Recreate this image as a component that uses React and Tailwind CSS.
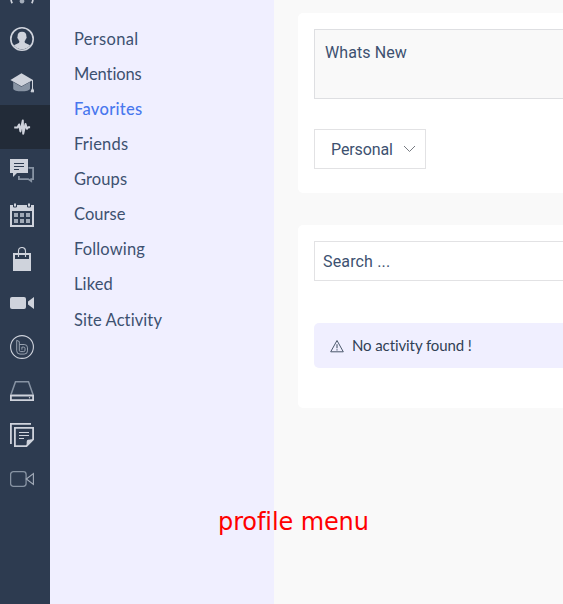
import React from "react";

const LIGHT = "#cfd3dc";
const DIM = "#8793a3";

function Icon({ children }) {
  return (
    <svg className="block h-6 w-6 shrink-0" viewBox="0 0 24 24" fill="none">
      {children}
    </svg>
  );
}

const railIcons = [
  {
    name: "profile",
    art: (
      <>
        <circle cx="12" cy="12" r="11.2" stroke={LIGHT} strokeWidth="1.6" />
        <path
          d="M12 4.700c-3 0-4.600 1.900-4.400 4.700-.5.500-.3 2 .6 2.500.2.900.6 1.500 1.100 2 .2 1.300-.2 1.900-1.100 2.300L3.900 18.200A10.200 10.200 0 0 0 12 22.200a10.200 10.200 0 0 0 8.100-4l-4.300-2c-.9-.4-1.300-1-1.100-2.300.5-.5.900-1.100 1.100-2 .9-.5 1.100-2 .6-2.500.2-2.800-1.300-4.700-4.300-4.700z"
          fill={LIGHT}
        />
      </>
    ),
  },
  {
    name: "courses",
    art: (
      <>
        <path d="M3.200 11v6.500c0 3.800 16.800 3.800 16.800 0V11l-8.600 4.800z" fill={DIM} />
        <path d="M11.500 2.300 23 8.900l-11.500 6.400L.4 8.900z" fill={LIGHT} />
        <path d="M22.500 9v9.500M22.500 17.200l-1.500 3.600h3z" stroke={LIGHT} strokeWidth="1" fill={LIGHT} />
      </>
    ),
  },
  {
    name: "activity",
    active: true,
    art: (
      <path
        d="M4.200 12.400h3.300l1.600-2.900 1.300 6.900L12.800 5.500l.4 13.200 2.300-9.700 1.400 4.800 1.200-1.500h2"
        stroke={LIGHT}
        strokeWidth="2"
        strokeLinejoin="round"
      />
    ),
  },
  {
    name: "messages",
    art: (
      <>
        <path d="M18.500 8.900h4.600v11.200h-1.900v2l-3-2H8.900v-3" stroke={DIM} strokeWidth="1.8" />
        <path d="M0 0h18v14H7l-4 4v-4H0z" fill={LIGHT} />
        <path d="M4 4.500h10M4 7.500h10M4 10.500h5" stroke="#2d3b50" strokeWidth="1" />
      </>
    ),
  },
  {
    name: "calendar",
    art: (
      <>
        <path d="M0 2h24v22H0z" fill={LIGHT} />
        <path d="M2 8h20v14H2z" fill="#2d3b50" />
        <path d="M4 10h4v4H4zM10 10h4v4h-4zM16 10h4v4h-4zM4 16h4v4H4zM10 16h4v4h-4zM16 16h4v4h-4z" fill="#a0a9b6" />
        <path d="M3.500 0h3v4h-3zM17.500 0h3v4h-3z" fill={LIGHT} stroke="#2d3b50" strokeWidth="1" />
      </>
    ),
  },
  {
    name: "shop",
    art: (
      <>
        <path d="M3 6h18v18H3z" fill={LIGHT} />
        <path d="M5 8h14v4H5z" fill="#2d3b50" />
        <path d="M8.500 10V4a3.500 3.500 0 0 1 7 0v6" stroke={LIGHT} strokeWidth="1.1" />
      </>
    ),
  },
  {
    name: "video",
    art: (
      <>
        <rect x="0" y="6" width="16" height="12" rx="2" fill={LIGHT} />
        <path d="M24 6v12l-6-4.500v-3z" fill={LIGHT} />
      </>
    ),
  },
  {
    name: "meetings",
    art: (
      <>
        <circle cx="12" cy="12" r="11.400" stroke={LIGHT} strokeWidth="1.1" />
        <path
          d="M6.700 5.300 9.300 6.600V9.500h4.900a3.300 3.300 0 0 1 3.300 3.300v3a3.300 3.300 0 0 1-3.300 3.300H10a3.300 3.300 0 0 1-3.300-3.300zM9.300 9.500v5.800c0 .8.500 1.300 1.300 1.300h3.100c.8 0 1.300-.5 1.300-1.300v-1.900c0-.8-.5-1.300-1.300-1.300h-1.800v2.600"
          stroke="#a4adba"
          strokeWidth=".9"
        />
      </>
    ),
  },
  {
    name: "drive",
    art: (
      <>
        <path d="M1 15.500 5.500 2.700h13L23 15.500" stroke={DIM} strokeWidth="1.500" />
        <path d="M.9 16.500h22.200v4.600H.9z" stroke={LIGHT} strokeWidth="1.800" />
        <circle cx="19.500" cy="18.700" r=".7" fill={LIGHT} />
      </>
    ),
  },
  {
    name: "notes",
    art: (
      <>
        <path d="M21 .9H.9V21" stroke={LIGHT} strokeWidth="1.800" />
        <path d="M4.900 4.900h18.200v11.600l-6.600 6.600H4.900z" stroke={LIGHT} strokeWidth="1.800" />
        <path d="M15.500 24c2-1.500.7-5 1.500-6.500s5-.2 7-2z" fill={LIGHT} />
        <path d="M9 9.500h10M9 12.500h10M9 15.500h5" stroke={LIGHT} strokeWidth="1" />
      </>
    ),
  },
  {
    name: "webinar",
    art: (
      <>
        <rect x=".6" y="4.600" width="15.500" height="14.800" rx="2.800" stroke={DIM} strokeWidth="1.300" />
        <path d="M23.400 6.500v11L16.300 12z" stroke="#a4adba" strokeWidth="1.100" />
      </>
    ),
  },
];

const menu = [
  { label: "Personal", spacing: "tracking-[0.3px]" },
  { label: "Mentions", spacing: "tracking-[-0.1px]" },
  { label: "Favorites", spacing: "tracking-[0.3px]", active: true },
  { label: "Friends", spacing: "tracking-[0.2px]" },
  { label: "Groups", spacing: "tracking-[0.1px]" },
  { label: "Course", spacing: "tracking-[0.05px]" },
  { label: "Following", spacing: "tracking-[0.15px]" },
  { label: "Liked", spacing: "tracking-[0.1px]" },
  { label: "Site Activity", spacing: "tracking-[0.1px]" },
];

function Rail() {
  return (
    <nav className="flex w-[50px] shrink-0 flex-col bg-[#2d3b50]">
      <div className="flex h-[17px] shrink-0 items-end overflow-hidden pb-[10px] pl-[10px]">
        <Icon>
          <path d="M.9 14c0 3.500.1 4.500 1.300 6.300M23.100 14c0 3.500-.1 4.500-1.300 6.300" stroke={LIGHT} strokeWidth="1.700" />
          <circle cx="12" cy="18.300" r="2.300" fill="#a4adba" />
        </Icon>
      </div>
      {railIcons.map((item) => (
        <div
          key={item.name}
          className={`flex h-11 shrink-0 items-center pl-[10px] ${item.active ? "bg-[#222b38]" : ""}`}
        >
          <Icon>{item.art}</Icon>
        </div>
      ))}
    </nav>
  );
}

export default function App() {
  return (
    <div className="relative flex h-[604px] w-[563px] overflow-hidden bg-[#f9f9f9] font-['Lato','Noto_Sans',sans-serif] text-[#3d5170] [font-variant-ligatures:none]">
      <Rail />

      <aside className="w-[224px] shrink-0 bg-[#f0efff] pt-[21px] pl-6">
        <ul className="flex flex-col">
          {menu.map((item) => (
            <li
              key={item.label}
              className={`flex h-[35.125px] items-center text-[16.5px] leading-6 whitespace-nowrap ${item.spacing} ${
                item.active ? "font-medium text-[#4877ee]" : ""
              }`}
            >
              <span>{item.label}</span>
            </li>
          ))}
        </ul>
      </aside>

      <main className="flex min-w-0 flex-1 flex-col gap-8 pt-[13px] pl-6">
        <section className="h-[180px] rounded-l-[5px] bg-white pt-4 pl-4 font-[Roboto,sans-serif]">
          <div className="h-[70px] border border-r-0 border-[#dedfe2] bg-[#f9f9f9] pt-[11px] pl-[10px] text-base leading-6 tracking-[0.1px]">
            <span>Whats New</span>
          </div>
          <div className="mt-[30px] flex h-10 w-28 items-center justify-between border border-[#e2e2e4] bg-white pr-[9px] pl-4 text-base leading-6 tracking-[-0.1px]">
            <span className="pt-[2px]">Personal</span>
            <svg className="h-[8px] w-[13px]" viewBox="0 0 13 8" fill="none">
              <path d="M1 1l5.500 5.500L12 1" stroke="#777b82" strokeWidth="1" />
            </svg>
          </div>
        </section>

        <section className="h-[183px] rounded-l-[5px] bg-white pt-4 pl-4">
          <div className="flex h-10 items-center border border-r-0 border-[#e2e2e4] pl-2 font-[Roboto,sans-serif] text-base leading-6 tracking-[0.15px]">
            <span className="pt-[2px]">Search ...</span>
          </div>
          <div className="mt-[42px] flex h-[45px] items-center gap-2 rounded-l-[5px] bg-[#f0efff] pl-4 text-[15px] leading-6 tracking-[-0.1px] text-[#303f55]">
            <svg className="h-[14px] w-[14px]" viewBox="0 0 14 14" fill="none">
              <path d="M7 1.500.700 12.800h12.600z" stroke="#4a586b" strokeWidth="1" />
              <path d="M7 5.300v4M7 10.300v1.200" stroke="#4a586b" strokeWidth="1.100" />
            </svg>
            <span className="pb-[2px]">No activity found !</span>
          </div>
        </section>
      </main>

      <div className="absolute top-[504px] left-[218px] h-9 font-['DejaVu_Sans',sans-serif] text-[24px] leading-9 tracking-[-0.1px] whitespace-nowrap text-[#ff0000]">
        profile menu
      </div>
    </div>
  );
}
